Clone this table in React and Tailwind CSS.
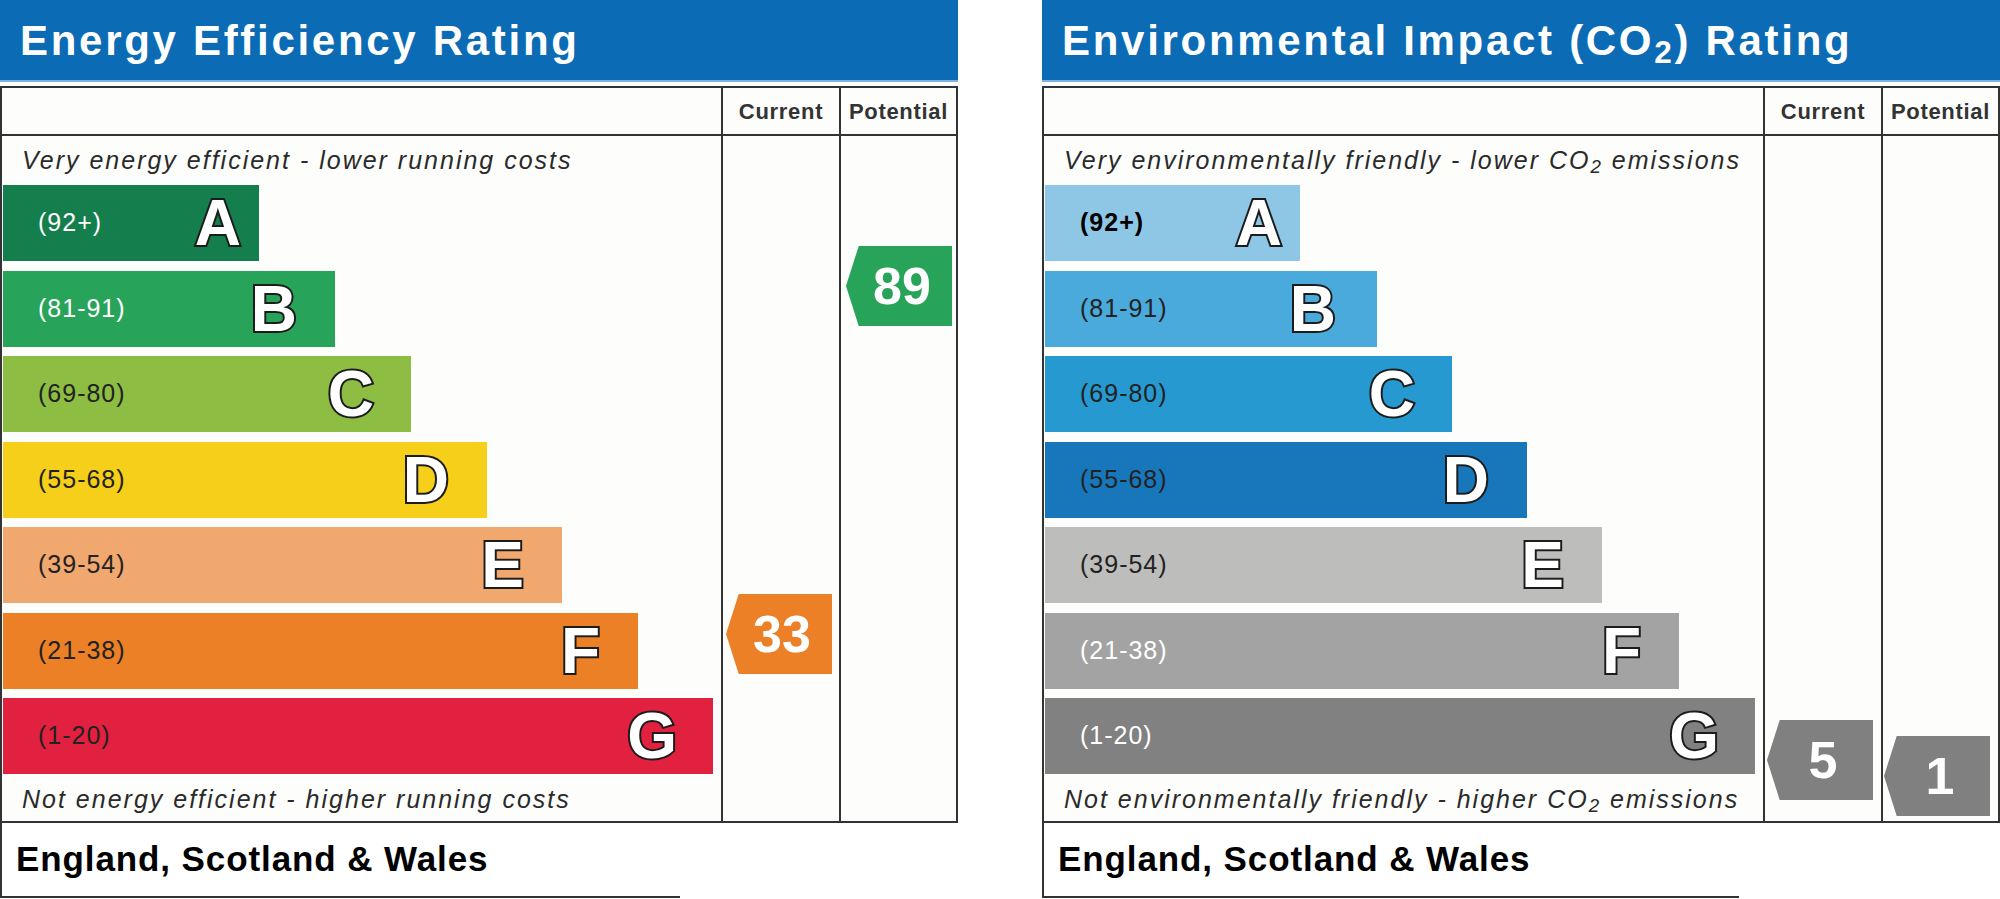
const FONT = "[font-family:'Liberation_Sans',Arial,Helvetica,sans-serif]";

const ENERGY_BANDS = [
  { band: 'A', range: '(92+)',   width: 256, bg: 'bg-[#147e4c]', label: 'text-white',      pr: 'pr-[18px]' },
  { band: 'B', range: '(81-91)', width: 332, bg: 'bg-[#28a45a]', label: 'text-white',      pr: 'pr-[38px]' },
  { band: 'C', range: '(69-80)', width: 408, bg: 'bg-[#8dbd43]', label: 'text-[#222]',     pr: 'pr-[37px]' },
  { band: 'D', range: '(55-68)', width: 484, bg: 'bg-[#f5cf19]', label: 'text-[#222]',     pr: 'pr-[38px]' },
  { band: 'E', range: '(39-54)', width: 559, bg: 'bg-[#f1a86e]', label: 'text-[#222]',     pr: 'pr-[38px]' },
  { band: 'F', range: '(21-38)', width: 635, bg: 'bg-[#ec8027]', label: 'text-[#222]',     pr: 'pr-[38px]' },
  { band: 'G', range: '(1-20)',  width: 710, bg: 'bg-[#e2203f]', label: 'text-[#222]',     pr: 'pr-[36px]' },
];

const CO2_BANDS = [
  { band: 'A', range: '(92+)',   width: 255, bg: 'bg-[#8ec6e6]', label: 'text-black font-bold', pr: 'pr-[18px]' },
  { band: 'B', range: '(81-91)', width: 332, bg: 'bg-[#4aaadc]', label: 'text-[#222]',     pr: 'pr-[41px]' },
  { band: 'C', range: '(69-80)', width: 407, bg: 'bg-[#2799d1]', label: 'text-[#222]',     pr: 'pr-[37px]' },
  { band: 'D', range: '(55-68)', width: 482, bg: 'bg-[#1877bb]', label: 'text-[#222]',     pr: 'pr-[38px]' },
  { band: 'E', range: '(39-54)', width: 557, bg: 'bg-[#bdbdbc]', label: 'text-[#222]',     pr: 'pr-[38px]' },
  { band: 'F', range: '(21-38)', width: 634, bg: 'bg-[#a3a3a3]', label: 'text-white',      pr: 'pr-[38px]' },
  { band: 'G', range: '(1-20)',  width: 710, bg: 'bg-[#818181]', label: 'text-white',      pr: 'pr-[36px]' },
];

// score markers sit in the Current / Potential columns, offset from the top of the band area
function Marker({ value, top, left, bg }) {
  return (
    <div
      style={{ marginTop: top, marginLeft: left }}
      className={`w-[106px] h-[80px] ${bg} flex items-center justify-center pl-[6px] [clip-path:polygon(12%_0,100%_0,100%_100%,12%_100%,0_50%)]`}
    >
      <span className="text-white font-bold text-[52px] leading-none">{value}</span>
    </div>
  );
}

function BandBar({ b }) {
  return (
    <div
      style={{ width: b.width }}
      className={`h-[76px] ml-[1px] ${b.bg} flex items-center justify-between pl-[35px] ${b.pr}`}
    >
      <span className={`text-[25px] tracking-[1px] ${b.label}`}>{b.range}</span>
      <span className="text-white font-bold text-[64px] leading-none [-webkit-text-stroke:4px_#1c1c1c] [paint-order:stroke_fill]">
        {b.band}
      </span>
    </div>
  );
}

function RatingPanel({ title, top, bottom, bands, current, potential, footWidth }) {
  return (
    <div className="w-[958px] shrink-0 flex flex-col">
      <div className="h-[82px] bg-[#0b6bb4] border-b-2 border-[#7fb3dd] flex items-center pl-[20px]">
        <h2 className="text-white font-bold text-[42px] tracking-[2.7px] leading-none pt-[2px]">{title}</h2>
      </div>

      <div className="mt-[4px] border-2 border-[#333] bg-[#fdfdfc] grid grid-cols-[719px_118px_117px] grid-rows-[48px_685px]">
        <div className="border-b-2 border-[#333]" />
        <div className="border-b-2 border-l-2 border-[#333] flex items-center justify-center">
          <span className="font-bold text-[22px] tracking-[0.7px] text-[#333]">Current</span>
        </div>
        <div className="border-b-2 border-l-2 border-[#333] flex items-center justify-center">
          <span className="font-bold text-[22px] tracking-[0.7px] text-[#333]">Potential</span>
        </div>

        <div className="flex flex-col">
          <div className="h-[49px] flex items-center pl-[20px]">
            <span className="italic text-[25px] tracking-[2px] text-[#2a2a2a]">{top}</span>
          </div>
          <div className="flex flex-col gap-[9.5px]">
            {bands.map(b => <BandBar key={b.band} b={b} />)}
          </div>
          <div className="flex-1 flex items-center pl-[20px] pt-[4px]">
            <span className="italic text-[25px] tracking-[2px] text-[#2a2a2a]">{bottom}</span>
          </div>
        </div>
        <div className="border-l-2 border-[#333] flex flex-col">
          {current && <Marker {...current} />}
        </div>
        <div className="border-l-2 border-[#333] flex flex-col">
          {potential && <Marker {...potential} />}
        </div>
      </div>

      <div
        style={{ width: footWidth }}
        className="h-[75px] border-l-2 border-b-2 border-[#333] flex items-center pl-[14px]"
      >
        <span className="font-bold text-[35px] tracking-[0.9px] text-black">England, Scotland &amp; Wales</span>
      </div>
    </div>
  );
}

export default function App() {
  const co2 = <>CO<sub>2</sub></>;
  return (
    <div className={`w-[2000px] h-[899px] bg-white flex gap-[84px] overflow-hidden ${FONT}`}>
      <RatingPanel
        title="Energy Efficiency Rating"
        top="Very energy efficient - lower running costs"
        bottom="Not energy efficient - higher running costs"
        bands={ENERGY_BANDS}
        current={{ value: 33, top: 458, left: 3, bg: 'bg-[#ec8027]' }}
        potential={{ value: 89, top: 110, left: 5, bg: 'bg-[#28a45a]' }}
        footWidth={680}
      />
      <RatingPanel
        title={<>Environmental Impact ({co2}) Rating</>}
        top={<>Very environmentally friendly - lower {co2} emissions</>}
        bottom={<>Not environmentally friendly - higher {co2} emissions</>}
        bands={CO2_BANDS}
        current={{ value: 5, top: 584, left: 2, bg: 'bg-[#808080]' }}
        potential={{ value: 1, top: 600, left: 1, bg: 'bg-[#808080]' }}
        footWidth={697}
      />
    </div>
  );
}
